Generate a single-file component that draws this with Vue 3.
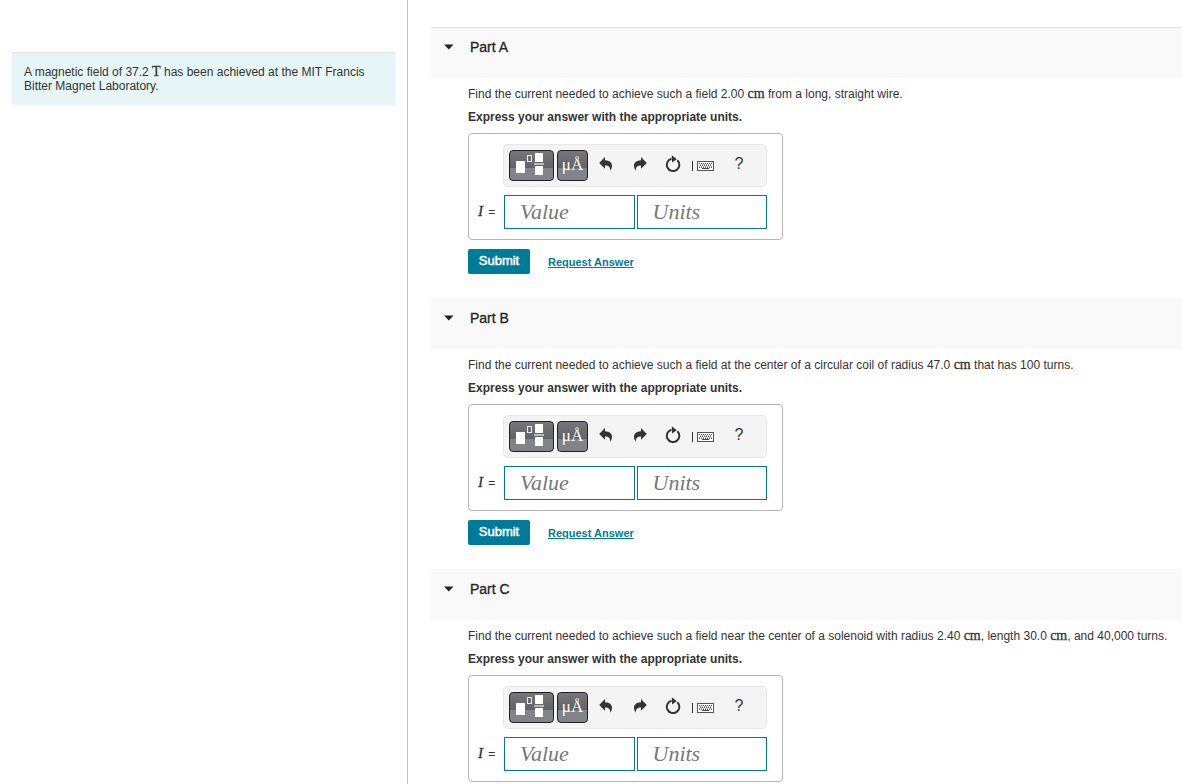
<script setup>
const parts = [
  { id: 'A', before: 'Find the current needed to achieve such a field 2.00 ', unit: 'cm', after: ' from a long, straight wire.' },
  { id: 'B', before: 'Find the current needed to achieve such a field at the center of a circular coil of radius 47.0 ', unit: 'cm', after: ' that has 100 turns.' },
  { id: 'C', before: 'Find the current needed to achieve such a field near the center of a solenoid with radius 2.40 ', unit: 'cm', after: ', length 30.0 ', unit2: 'cm', after2: ', and 40,000 turns.' },
]
</script>

<template>
  <div class="page">
    <aside class="intro">
      <p class="problem">A magnetic field of 37.2 <span class="math">T</span> has been achieved at the MIT Francis Bitter Magnet Laboratory.</p>
    </aside>
    <main class="parts">
      <section v-for="p in parts" :key="p.id" class="part">
        <header class="head">
          <button class="toggle" type="button" :aria-label="'Collapse Part ' + p.id">
            <svg width="10" height="6" viewBox="0 0 10 6"><path d="M0 0.500h9.500L4.800 5.600z" fill="#222" /></svg>
          </button>
          <h2>Part {{ p.id }}</h2>
        </header>
        <div class="body">
          <p class="question">{{ p.before }}<span class="math">{{ p.unit }}</span>{{ p.after }}<template v-if="p.unit2"><span class="math">{{ p.unit2 }}</span>{{ p.after2 }}</template></p>
          <p class="question strong">Express your answer with the appropriate units.</p>
          <form class="answer" @submit.prevent>
            <div class="box">
              <div class="tools">
                <button class="dark templates" type="button" aria-label="Templates">
                  <svg width="31" height="25" viewBox="0 0 31 25">
                    <rect x="0" y="8" width="9" height="12" fill="#fff" />
                    <rect x="11.500" y="2.500" width="4" height="6" fill="none" stroke="#e8e8e8" />
                    <rect x="19" y="0" width="8" height="9" fill="#fff" />
                    <rect x="18" y="10" width="10" height="2" fill="#bbb" />
                    <rect x="19" y="13" width="8" height="9" fill="#fff" />
                  </svg>
                </button>
                <button class="dark symbols" type="button" aria-label="Symbols">μÅ</button>
                <button class="tool" type="button" aria-label="Undo">
                  <svg width="14" height="14" viewBox="0 0 14 14"><path d="M6 0v3.200c4.700.2 7 2.300 7 5.600 0 1.900-.7 3.600-2 4.900.5-3.600-1.200-5.100-5-5.200v3.300L0.200 5.900z" fill="#333" /></svg>
                </button>
                <button class="tool" type="button" aria-label="Redo">
                  <svg width="14" height="14" viewBox="0 0 14 14"><path d="M8 0v3.200c-4.700.2-7 2.300-7 5.600 0 1.900.7 3.600 2 4.900-.5-3.600 1.200-5.100 5-5.200v3.300l5.800-5.900z" fill="#333" /></svg>
                </button>
                <button class="tool reset" type="button" aria-label="Reset">
                  <svg width="16" height="18" viewBox="0 0 16 18"><path d="M12.400 5.200A6.300 6.300 0 1 1 6.500 3.700" fill="none" stroke="#333" stroke-width="2" /><path d="M6.800 0.200l5 4-4.800 3.300z" fill="#333" /></svg>
                </button>
                <button class="tool keyboard" type="button" aria-label="Keyboard">
                  <svg width="24" height="14" viewBox="0 0 24 14">
                    <path d="M1.500 2v10" stroke="#333" />
                    <rect x="6.500" y="2.500" width="16" height="9" fill="#fff" stroke="#555" />
                    <path d="M8 4.500h13M9 6.500h12M8 8.500h13" stroke="#555" stroke-dasharray="1 1" />
                    <path d="M9 5.500h12M8 7.500h13" stroke="#999" stroke-dasharray="1 1" />
                    <path d="M11 9.500h7" stroke="#444" />
                  </svg>
                </button>
                <button class="tool help" type="button" aria-label="Help">?</button>
              </div>
              <div class="entry">
                <label :for="'value-' + p.id"><i>I</i> =</label>
                <input :id="'value-' + p.id" type="text" placeholder="Value" />
                <input type="text" placeholder="Units" :aria-label="'Units for Part ' + p.id" />
              </div>
            </div>
            <div class="actions">
              <button class="submit" type="submit">Submit</button>
              <a href="#">Request Answer</a>
            </div>
          </form>
        </div>
      </section>
    </main>
  </div>
</template>

<style>
body {
  margin: 0;
  background: #fff;
}
</style>

<style scoped>
.page {
  display: flex;
  height: 100vh;
  overflow: hidden;
  font: 12px/14px "Liberation Sans", Arial, sans-serif;
  color: #333;
}
.page * {
  box-sizing: border-box;
}
p, h2 {
  margin: 0;
}
button {
  padding: 0;
  border: 0;
  background: none;
  cursor: pointer;
}
svg {
  display: block;
}
.math {
  font-family: "Liberation Serif", serif;
  font-size: 14px;
  line-height: 12px;
  -webkit-text-stroke: 0.3px currentColor;
}
.intro {
  flex: 0 0 408px;
  padding: 52px 12px 0;
  border-right: 1px solid #b8c4ca;
}
.problem {
  padding: 12px 12px;
  border-top: 1px solid #dfe6e6;
  background: #e6f6f7;
}
.parts {
  flex: 1;
  min-width: 0;
  padding: 27px 0 0 23px;
  overflow: hidden;
}
.part {
  padding-bottom: 24px;
}
.head {
  display: flex;
  align-items: flex-start;
  height: 51px;
  padding: 12px 13px;
  background: #f9f9f9;
}
.part:first-child .head {
  box-shadow: inset 0 1px #e2e2e2;
}
.toggle {
  padding: 5px 0;
}
h2 {
  margin-left: 16px;
  font-size: 14px;
  line-height: 16px;
  font-weight: 400;
  color: #222;
  -webkit-text-stroke: 0.3px currentColor;
}
.body {
  padding: 9px 0 0 37px;
}
.question {
  margin-bottom: 9px;
  white-space: nowrap;
}
.strong {
  font-weight: 700;
}
.box {
  width: 315px;
  padding: 10px 15px 10px 9px;
  border: 1px solid #b5b5b5;
  border-radius: 4px;
}
.tools {
  display: flex;
  align-items: center;
  height: 43px;
  margin-left: 25px;
  padding: 0 5px;
  border: 1px solid #e6e6e6;
  border-radius: 5px;
  background: #f4f4f4;
}
.dark {
  display: flex;
  flex-shrink: 0;
  align-items: center;
  justify-content: center;
  height: 31px;
  border: 1px solid #222;
  border-radius: 4px;
  background: linear-gradient(#77777b 0%, #636367 58%, #83838a 59%, #828289 100%);
  color: #fff;
}
.templates {
  width: 45px;
}
.symbols {
  width: 31px;
  margin-left: 3px;
  padding-bottom: 2px;
  font: 17px/24px "Liberation Serif", serif;
}
.tool {
  display: flex;
  flex-shrink: 0;
  align-items: center;
  justify-content: center;
  width: 34px;
  height: 31px;
  padding-bottom: 4px;
  color: #333;
}
.symbols + .tool {
  margin-left: 1px;
}
.reset {
  width: 31px;
}
.keyboard {
  width: 30px;
  padding-bottom: 0;
}
.help {
  width: 42px;
  font: 16px/20px "Liberation Sans", Arial, sans-serif;
}
.entry {
  display: flex;
  align-items: center;
  gap: 2px;
  margin-top: 8px;
}
label {
  flex: 0 0 24px;
  padding-bottom: 2px;
  font-size: 12px;
  white-space: nowrap;
}
label i {
  margin-right: 2px;
  font: italic 15px/16px "Liberation Serif", serif;
  -webkit-text-stroke: 0.3px currentColor;
}
input {
  flex: 1;
  min-width: 0;
  height: 34px;
  padding: 0 15px;
  border: 1px solid #007a99;
  border-radius: 0;
  background: #fff;
  font: italic 22px/24px "Liberation Serif", serif;
  color: #333;
}
input::placeholder {
  color: #777;
  opacity: 1;
}
.actions {
  display: flex;
  align-items: center;
  gap: 18px;
  margin-top: 9px;
}
.submit {
  width: 62px;
  height: 25px;
  padding-bottom: 2px;
  border-radius: 2px;
  background: #007a99;
  color: #fff;
  font: 13px/22px "Liberation Sans", Arial, sans-serif;
  -webkit-text-stroke: 0.5px currentColor;
}
a {
  color: #007a99;
  font-size: 11px;
  font-weight: 700;
}
</style>
